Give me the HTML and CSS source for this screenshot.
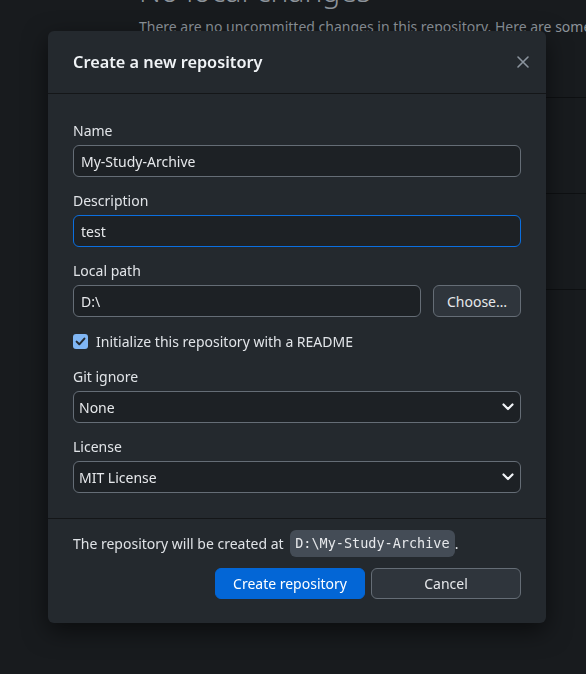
FILE: index.html
```html
<!DOCTYPE html>
<html lang="en">
<head>
<meta charset="utf-8">
<title>Create a new repository</title>
<link rel="stylesheet" href="styles.css">
</head>
<body>
<main class="page">
  <h1 class="blank-title">No local changes</h1>
  <p class="blank-sub">There are no uncommitted changes in this repository. Here are some friendly suggestions for what to do next.</p>
  <div class="suggestions">
    <div class="suggestion"></div>
    <div class="suggestion"></div>
    <div class="suggestion"></div>
  </div>
</main>

<div class="overlay">
  <form class="dialog">
    <header class="dialog-header">
      <h2 class="dialog-title">Create a new repository</h2>
      <button type="button" class="close" aria-label="Close">
        <svg width="14" height="14" viewBox="0 0 14 14"><path d="M2 2 L12 12 M12 2 L2 12" stroke="currentColor" stroke-width="1.6" stroke-linecap="round" fill="none"/></svg>
      </button>
    </header>

    <div class="dialog-body">
      <div class="field">
        <label class="label">Name</label>
        <input class="text-input" type="text" value="My-Study-Archive">
      </div>
      <div class="field">
        <label class="label">Description</label>
        <input class="text-input focused" type="text" value="test">
      </div>
      <div class="field">
        <label class="label">Local path</label>
        <div class="path-row">
          <input class="text-input path-input" type="text" value="D:\">
          <button type="button" class="btn btn-secondary choose">Choose…</button>
        </div>
      </div>
      <div class="field check-field">
        <span class="checkbox">
          <svg width="15" height="15" viewBox="0 0 15 15"><rect x="0" y="0" width="15" height="15" rx="3" fill="#80b6f4"/><path d="M3.6 7.6 L6.3 10.3 L11.4 4.6" stroke="#24292e" stroke-width="2" fill="none" stroke-linecap="round" stroke-linejoin="round"/></svg>
        </span>
        <span class="check-label">Initialize this repository with a README</span>
      </div>
      <div class="field">
        <label class="label">Git ignore</label>
        <div class="select">
          <span>None</span>
          <svg width="12" height="8" viewBox="0 0 12 8"><path d="M1.5 1.5 L6 6 L10.5 1.5" stroke="#f0f3f6" stroke-width="2.2" fill="none" stroke-linecap="round" stroke-linejoin="round"/></svg>
        </div>
      </div>
      <div class="field last">
        <label class="label">License</label>
        <div class="select">
          <span>MIT License</span>
          <svg width="12" height="8" viewBox="0 0 12 8"><path d="M1.5 1.5 L6 6 L10.5 1.5" stroke="#f0f3f6" stroke-width="2.2" fill="none" stroke-linecap="round" stroke-linejoin="round"/></svg>
        </div>
      </div>
    </div>

    <footer class="dialog-footer">
      <p class="footer-msg">The repository will be created at <code class="path-code">D:\My-Study-Archive</code>.</p>
      <div class="buttons">
        <button type="submit" class="btn btn-primary">Create repository</button>
        <button type="button" class="btn btn-secondary">Cancel</button>
      </div>
    </footer>
  </form>
</div>
</body>
</html>
```

FILE: styles.css
```css
* { box-sizing: border-box; }

html, body {
  margin: 0;
  height: 100%;
}

body {
  background: #181b1e;
  font-family: "Noto Sans", "Open Sans", sans-serif;
  font-size: 14px;
  color: #e1e4e8;
  overflow: hidden;
}

.page {
  padding-left: 139px;
  overflow: hidden;
}

.blank-title {
  margin: -24px 0 0 0;
  font-size: 30px;
  line-height: 30px;
  font-weight: 300;
  color: #8d949b;
  white-space: nowrap;
}

.blank-sub {
  margin: 11px 0 0 0;
  line-height: 20px;
  font-size: 14px;
  color: #8d949b;
  white-space: nowrap;
}

.suggestions {
  margin-top: 60px;
}

.suggestion {
  height: 96px;
  border-top: 1px solid #0e1012;
}

.overlay {
  position: fixed;
  inset: 0;
  padding: 31px 0 0 48px;
}

.dialog {
  width: 498px;
  background: #24292e;
  border-radius: 6px;
  box-shadow: 0 8px 24px rgba(0, 0, 0, 0.55);
}

.dialog-header {
  height: 63px;
  display: flex;
  align-items: center;
  justify-content: space-between;
  padding: 0 16px 0 25px;
  border-bottom: 1px solid #141618;
}

.dialog-title {
  margin: 0;
  font-size: 16.3px;
  font-weight: 600;
  color: #f0f3f6;
}

.close {
  background: none;
  border: 0;
  padding: 0;
  width: 14px;
  height: 14px;
  color: #8b949e;
  display: flex;
  margin-top: 0;
}

.dialog-body {
  padding: 27px 25px 25px 25px;
}

.field {
  display: flex;
  flex-direction: column;
  margin-bottom: 14px;
}

.field.last {
  margin-bottom: 0;
}

.label {
  display: block;
  line-height: 20px;
  margin-bottom: 4px;
  color: #e1e4e8;
}

.text-input {
  height: 32px;
  width: 100%;
  background: #1d2125;
  border: 1px solid #656d76;
  border-radius: 6px;
  padding: 0 7px;
  font: inherit;
  color: #e6e8eb;
  outline: none;
}

.text-input.focused {
  border-color: #0b6fe0;
}

.path-row {
  display: flex;
  gap: 12px;
}

.path-input {
  flex: 1;
}

.btn {
  height: 31px;
  border-radius: 6px;
  font: inherit;
  font-size: 14px;
  cursor: pointer;
  padding: 0;
}

.btn-secondary {
  background: #2f353c;
  border: 1px solid #656d76;
  color: #e6e8eb;
}

.btn-primary {
  background: #0366d6;
  border: 1px solid #0366d6;
  color: #ffffff;
}

.choose {
  width: 88px;
  height: 32px;
}

.check-field {
  flex-direction: row;
  align-items: center;
  height: 20px;
  margin-bottom: 16px;
  gap: 8px;
}

.checkbox {
  display: flex;
  width: 15px;
  height: 15px;
}

.check-label {
  color: #e1e4e8;
}

.select {
  height: 32px;
  display: flex;
  align-items: center;
  justify-content: space-between;
  background: #1d2125;
  border: 1px solid #656d76;
  border-radius: 6px;
  padding: 0 6px 0 5px;
  color: #e6e8eb;
}

.select svg {
  display: block;
}

.dialog-footer {
  border-top: 1px solid #141618;
  padding: 11px 25px 24px 25px;
}

.footer-msg {
  margin: 0;
  height: 27px;
  display: flex;
  align-items: center;
  white-space: pre;
  color: #dfe2e6;
}

.path-code {
  font-family: "DejaVu Sans Mono", "Liberation Mono", monospace;
  font-size: 13.5px;
  background: #444c56;
  color: #e6e8eb;
  border-radius: 6px;
  padding: 0 5px;
  height: 27px;
  line-height: 27px;
  margin-left: 3px;
}

.buttons {
  margin-top: 11px;
  display: flex;
  justify-content: flex-end;
  gap: 6px;
}

.buttons .btn {
  width: 150px;
}
```
